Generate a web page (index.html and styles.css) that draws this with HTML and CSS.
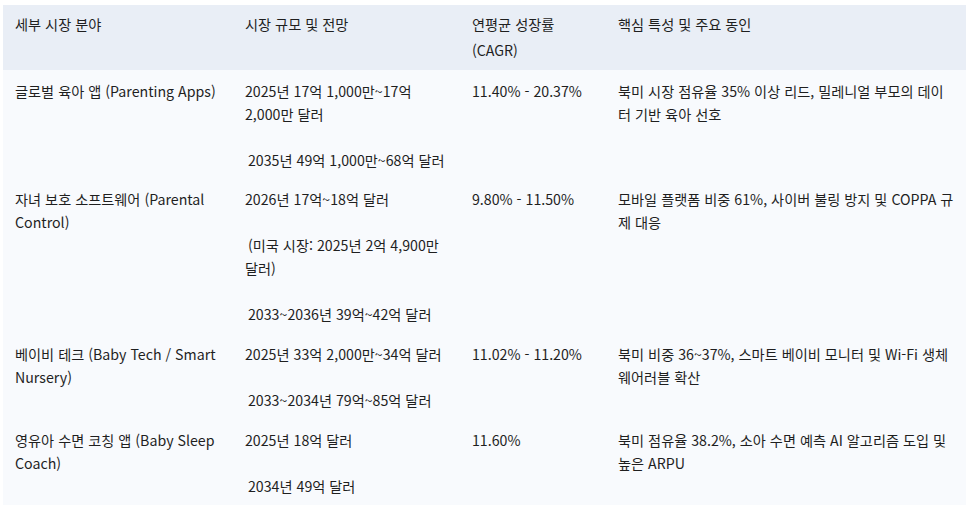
FILE: index.html
```html
<!DOCTYPE html>
<html lang="ko">
<head>
<meta charset="utf-8">
<title>세부 시장 분야</title>
<link rel="stylesheet" href="styles.css">
</head>
<body>
<table class="market">
  <colgroup>
    <col class="c1"><col class="c2"><col class="c3"><col class="c4">
  </colgroup>
  <thead>
    <tr>
      <th>세부 시장 분야</th>
      <th>시장 규모 및 전망</th>
      <th>연평균 성장률 (CAGR)</th>
      <th>핵심 특성 및 주요 동인</th>
    </tr>
  </thead>
  <tbody>
    <tr>
      <td>글로벌 육아 앱 (Parenting Apps)</td>
      <td><div class="p">2025년 17억 1,000만~17억 2,000만 달러</div><div class="p ind">2035년 49억 1,000만~68억 달러</div></td>
      <td>11.40% - 20.37%</td>
      <td>북미 시장 점유율 35% 이상 리드, 밀레니얼 부모의 데이터 기반 육아 선호</td>
    </tr>
    <tr>
      <td>자녀 보호 소프트웨어 (Parental Control)</td>
      <td><div class="p">2026년 17억~18억 달러</div><div class="p ind">(미국 시장: 2025년 2억 4,900만 달러)</div><div class="p ind">2033~2036년 39억~42억 달러</div></td>
      <td>9.80% - 11.50%</td>
      <td>모바일 플랫폼 비중 61%, 사이버 불링 방지 및 COPPA 규제 대응</td>
    </tr>
    <tr>
      <td>베이비 테크 (Baby Tech / Smart Nursery)</td>
      <td><div class="p">2025년 33억 2,000만~34억 달러</div><div class="p ind">2033~2034년 79억~85억 달러</div></td>
      <td>11.02% - 11.20%</td>
      <td>북미 비중 36~37%, 스마트 베이비 모니터 및 Wi-Fi 생체 웨어러블 확산</td>
    </tr>
    <tr>
      <td>영유아 수면 코칭 앱 (Baby Sleep Coach)</td>
      <td><div class="p">2025년 18억 달러</div><div class="p ind">2034년 49억 달러</div></td>
      <td>11.60%</td>
      <td>북미 점유율 38.2%, 소아 수면 예측 AI 알고리즘 도입 및 높은 ARPU</td>
    </tr>
  </tbody>
</table>
</body>
</html>
```

FILE: styles.css
```css
html, body {
  margin: 0;
  padding: 0;
  background: #ffffff;
}

body {
  font-family: "Noto Sans CJK KR", "Noto Sans", sans-serif;
  font-size: 14.2px;
  color: #1f1f1f;
}

.market {
  margin: 5px 0 0 3px;
  width: 963px;
  table-layout: fixed;
  border-collapse: collapse;
  border-spacing: 0;
}

.c1 { width: 230px; }
.c2 { width: 227px; }
.c3 { width: 146px; }
.c4 { width: 360px; }

.market th {
  background: #e9eef6;
  font-weight: normal;
  text-align: left;
  vertical-align: top;
  line-height: 26px;
  padding: 6px 12px 7px 12px;
}

.market td {
  background: #f8fafd;
  vertical-align: top;
  line-height: 23px;
  padding: 10px 12px 6px 12px;
}

.market tbody tr:nth-child(3) td,
.market tbody tr:last-child td {
  padding-top: 11px;
}

.market tbody tr:last-child td {
  padding-bottom: 7px;
}

.p + .p {
  margin-top: 23px;
}

.ind {
  text-indent: 3px;
}
```
